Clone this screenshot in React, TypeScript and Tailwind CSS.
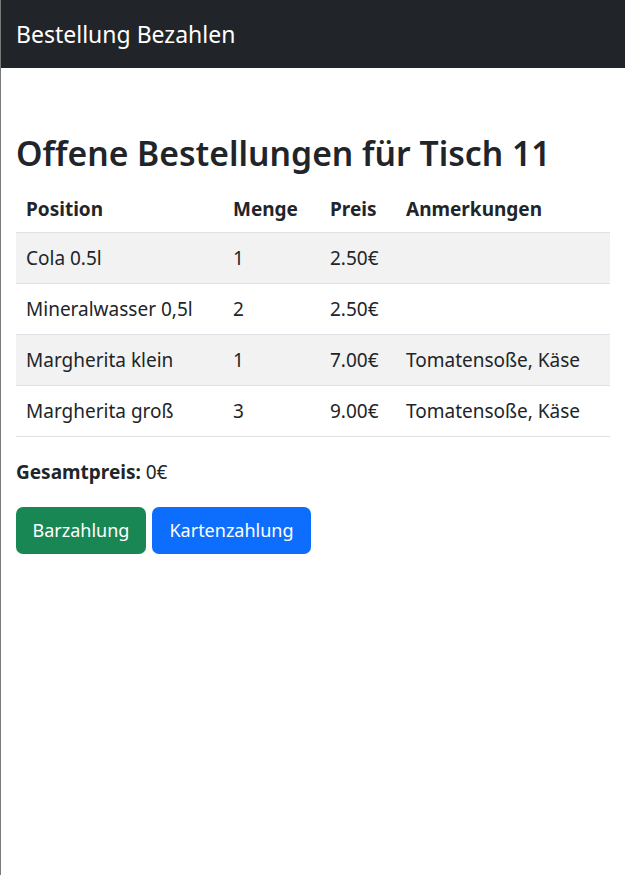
const items = [
    { name: 'Cola 0.5l', menge: 1, preis: '2.50€', notes: '' },
    { name: 'Mineralwasser 0,5l', menge: 2, preis: '2.50€', notes: '' },
    { name: 'Margherita klein', menge: 1, preis: '7.00€', notes: 'Tomatensoße, Käse' },
    { name: 'Margherita groß', menge: 3, preis: '9.00€', notes: 'Tomatensoße, Käse' },
]

const App = () => {
    return (
        <div className="min-h-[875px] bg-white text-[#212529] border-l border-[#7a7a7a] font-['Noto_Sans','Open_Sans',sans-serif]">
            <nav className="h-[68px] bg-[#212529] flex items-center px-[15px]">
                <span className="text-white text-[23px] leading-none">Bestellung Bezahlen</span>
            </nav>

            <div className="px-[15px]">
                <h1 className="mt-[63px] mb-[10px] text-[33.7px] leading-[44px] font-semibold">Offene Bestellungen für Tisch 11</h1>

                <table className="w-full table-fixed border-collapse text-[19px] leading-[30px]">
                    <thead>
                        <tr className="border-b border-[#dee2e6]">
                            <th className="w-[207px] text-left font-bold px-[10px] py-[8.5px]">Position</th>
                            <th className="w-[97px] text-left font-bold px-[10px] py-[8.5px]">Menge</th>
                            <th className="w-[76px] text-left font-bold px-[10px] py-[8.5px]">Preis</th>
                            <th className="text-left font-bold px-[10px] py-[8.5px]">Anmerkungen</th>
                        </tr>
                    </thead>
                    <tbody>
                        {items.map((item, index) => (
                            <tr key={item.name + index} className={`${index % 2 === 0 ? 'bg-[#f2f2f2]' : 'bg-white'} border-b border-[#dee2e6]`}>
                                <td className="px-[10px] py-[10px] whitespace-nowrap">{item.name}</td>
                                <td className="px-[10px] py-[10px]">{item.menge}</td>
                                <td className="px-[10px] py-[10px]">{item.preis}</td>
                                <td className="px-[10px] py-[10px] whitespace-nowrap">{item.notes}</td>
                            </tr>
                        ))}
                    </tbody>
                </table>

                <p className="mt-[20px] mb-[20px] text-[19px] leading-[30px]">
                    <b>Gesamtpreis:</b> 0€
                </p>

                <div className="flex gap-[6px]">
                    <button className="h-[47px] w-[130px] rounded-[7px] bg-[#198754] text-white text-[18px]">Barzahlung</button>
                    <button className="h-[47px] w-[159px] rounded-[7px] bg-[#0d6efd] text-white text-[18px]">Kartenzahlung</button>
                </div>
            </div>
        </div>
    )
}

export default App
